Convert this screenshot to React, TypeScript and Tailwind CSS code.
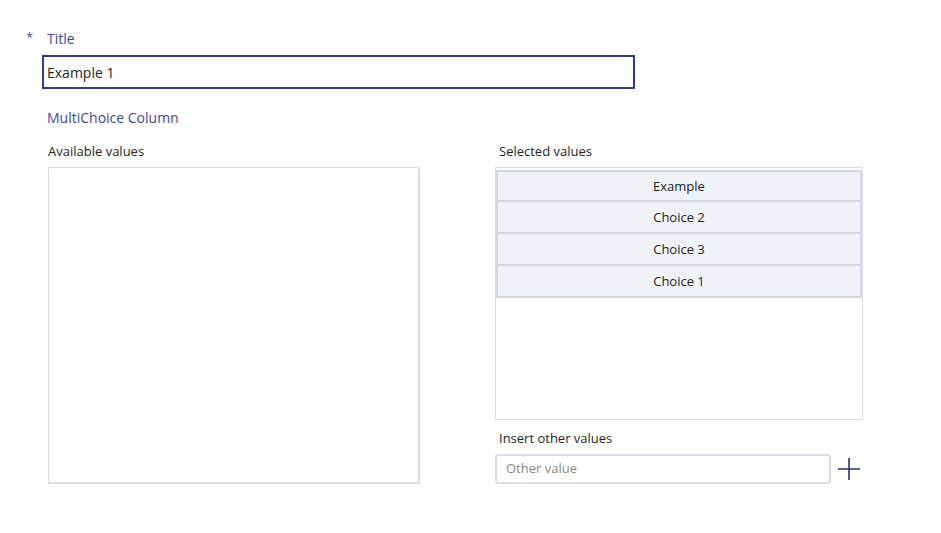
import React from 'react';

const choices = ['Example', 'Choice 2', 'Choice 3', 'Choice 1'];

export default function App() {
  return (
    <div className="w-[941px] h-[533px] bg-white font-['Open_Sans',sans-serif] text-[#252423]">
      <div className="flex items-center pt-[28px] pl-[26px] h-[48px] text-[14px] text-[#3b4a9e]">
        <span className="w-[21px] text-[13px]">*</span>
        <span>Title</span>
      </div>
      <div className="ml-[42px] mt-[7px] w-[593px] h-[34px] border-2 border-[#2f3b83] flex items-center pl-[3px] text-[14px] text-[#252423]">
        Example 1
      </div>
      <div className="ml-[47px] mt-[19px] text-[14px] text-[#3b4a9e] leading-[20px]">MultiChoice Column</div>

      <div className="flex ml-[48px] mt-[14px] gap-[75px]">
        <div className="flex flex-col w-[372px]">
          <div className="text-[13px] leading-[18px] h-[25px]">Available values</div>
          <div className="h-[317px] border border-[#dcdcea] border-r-2 border-b-2" />
        </div>

        <div className="flex flex-col w-[368px]">
          <div className="text-[13px] leading-[18px] h-[25px] pl-[4px]">Selected values</div>
          <div className="h-[253px] border border-[#dcdcea] pt-[2px]">
            {choices.map((c) => (
              <div
                key={c}
                className="h-[32px] bg-[#eff2f7] border-2 border-t-0 first:border-t-2 border-[#d4d7df] flex items-center justify-center pt-[1px] text-[13px] text-[#252423]"
              >
                {c}
              </div>
            ))}
          </div>
          <div className="text-[13px] leading-[18px] mt-[9px] pl-[4px]">Insert other values</div>
          <div className="flex items-center mt-[7px]">
            <div className="w-[336px] h-[30px] rounded-[3px] border-2 border-[#dcdcea] flex items-center pl-[9px] text-[13px] text-[#8a8886]">
              Other value
            </div>
            <svg width="24" height="24" viewBox="0 0 24 24" className="ml-[6px]">
              <path d="M12 1v22M1 12h22" stroke="#27316f" strokeWidth="1.6" fill="none" />
            </svg>
          </div>
        </div>
      </div>
    </div>
  );
}
